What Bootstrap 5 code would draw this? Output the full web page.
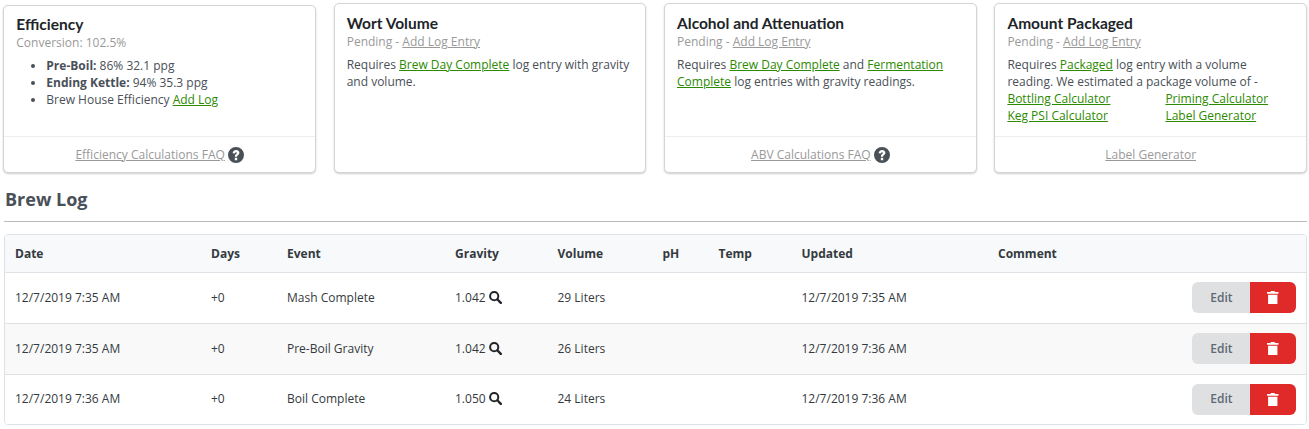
<!DOCTYPE html>
<html lang="en">
<head>
  <meta charset="UTF-8" />
  <meta name="viewport" content="width=device-width, initial-scale=1" />
  <title>Brew Log</title>
  <link href="https://cdn.jsdelivr.net/npm/bootstrap@5.3.0/dist/css/bootstrap.min.css" rel="stylesheet" />
  <style>
    body { font-family: "Open Sans", sans-serif; font-size: 12px; color: #495057; background: #fff; }
    a { color: #2b8a00; }
    .page-wrap { padding: 3px 2px 0 4px; }
    .stat-row { display: flex; gap: 17.75px; align-items: stretch; height: 170px; margin-left: -0.7px; }
    .stat-card { flex: 1 1 0; border: 1px solid #d5d5d5; border-radius: 5px; box-shadow: 0 1px 2px rgba(0,0,0,.2); display: flex; flex-direction: column; background: #fff; }
    .stat-first { margin-top: 2px; }
    .stat-body { flex: 1 1 auto; padding: 9px 12px 0; line-height: 17px; }
    .stat-title { font-family: Lato, sans-serif; font-weight: 700; font-size: 15.5px; line-height: 20px; color: #212529; margin: 0; }
    .stat-first .stat-title { line-height: 19px; }
    .stat-sub { color: #999; margin-bottom: 6px; line-height: 17px; }
    .stat-sub a { color: #999; }
    .stat-list { margin: 0; padding-left: 30px; }
    .stat-foot { height: 36px; border-top: 1px solid #eee; display: flex; align-items: center; justify-content: center; gap: 3px; color: #999; }
    .stat-foot a { color: #999; }
    .help-ico { width: 16px; height: 16px; fill: #495057; }
    .calc-links { display: grid; grid-template-columns: 158px 1fr; }
    .log-title { font-size: 18px; font-weight: 700; line-height: 24px; margin: 14px 0 10px 1px; color: #495057; }
    .log-rule { margin: 0 0 12px; border: 0; border-top: 1px solid #bbb; opacity: 1; }
    .log-box { border: 1px solid #dee2e6; border-radius: 4px; overflow: hidden; }
    .log-table { margin: 0; table-layout: fixed; width: 100%; font-size: 12px; color: #343a40; }
    .log-table th { background: #f8f9fa; height: 37px; padding: 2px 10px 0; font-weight: 700; vertical-align: middle; color: #343a40; border-bottom: 1px solid #dee2e6; }
    .log-table td { height: 51px; padding: 0 10px; vertical-align: middle; border-bottom: 1px solid #dee2e6; background: #fff; color: #343a40; }
    .log-table tr:last-child td { border-bottom: 0; height: 50px; }
    .log-table tr.row-alt td { background: #f9f9f9; }
    .c-date { width: 196px; } .c-days { width: 76px; } .c-event { width: 168px; } .c-grav { width: 102.5px; }
    .c-vol { width: 105px; } .c-ph { width: 56px; } .c-temp { width: 83px; } .c-upd { width: 196.5px; }
    .search-ico { width: 13px; height: 13px; vertical-align: -2px; }
    .btn-edit { width: 59px; height: 31px; padding: 0; background: #dee0e2; border: 0; color: #5f6a75; font-size: 12px; font-weight: 600; }
    .btn-del { width: 46px; height: 31px; padding: 0; background: #e02a2a; border: 0; display: flex; align-items: center; justify-content: center; }
    .btn-del:hover { background: #c92222; }
    .trash-ico { width: 11.5px; height: 13.5px; fill: #fff; }
  </style>
</head>
<body>
  <div class="page-wrap">
    <div class="stat-row">
      <div class="stat-card stat-first">
        <div class="stat-body">
          <h5 class="stat-title">Efficiency</h5>
          <div class="stat-sub">Conversion: 102.5%</div>
          <ul class="stat-list">
            <li><strong>Pre-Boil:</strong> 86% 32.1 ppg</li>
            <li><strong>Ending Kettle:</strong> 94% 35.3 ppg</li>
            <li>Brew House Efficiency <a href="#">Add Log</a></li>
          </ul>
        </div>
        <div class="stat-foot"><a href="#">Efficiency Calculations FAQ</a>
          <svg class="help-ico" viewBox="0 0 16 16"><path fill-rule="evenodd" d="M8 0a8 8 0 1 0 0 16A8 8 0 0 0 8 0zM6.800 10.800h2.400v2.400H6.800zM4.700 6.200C4.700 4.200 6.200 2.900 8.100 2.900c1.900 0 3.300 1.200 3.300 2.900 0 1.300-.8 2-1.500 2.500-.6.400-.8.600-.8 1.100v.3H6.900v-.6c0-1 .5-1.500 1.100-1.900.6-.4.900-.7.900-1.100 0-.5-.3-.8-.8-.8-.6 0-1 .4-1.100 1.100z"/></svg>
        </div>
      </div>
      <div class="stat-card">
        <div class="stat-body">
          <h5 class="stat-title">Wort Volume</h5>
          <div class="stat-sub">Pending - <a href="#">Add Log Entry</a></div>
          <div>Requires <a href="#">Brew Day Complete</a> log entry with gravity and volume.</div>
        </div>
      </div>
      <div class="stat-card">
        <div class="stat-body">
          <h5 class="stat-title">Alcohol and Attenuation</h5>
          <div class="stat-sub">Pending - <a href="#">Add Log Entry</a></div>
          <div>Requires <a href="#">Brew Day Complete</a> and <a href="#">Fermentation Complete</a> log entries with gravity readings.</div>
        </div>
        <div class="stat-foot"><a href="#">ABV Calculations FAQ</a>
          <svg class="help-ico" viewBox="0 0 16 16"><path fill-rule="evenodd" d="M8 0a8 8 0 1 0 0 16A8 8 0 0 0 8 0zM6.800 10.800h2.400v2.400H6.800zM4.700 6.200C4.700 4.200 6.200 2.900 8.100 2.900c1.900 0 3.300 1.200 3.300 2.900 0 1.300-.8 2-1.500 2.500-.6.400-.8.600-.8 1.100v.3H6.900v-.6c0-1 .5-1.500 1.100-1.900.6-.4.900-.7.900-1.100 0-.5-.3-.8-.8-.8-.6 0-1 .4-1.100 1.100z"/></svg>
        </div>
      </div>
      <div class="stat-card">
        <div class="stat-body">
          <h5 class="stat-title">Amount Packaged</h5>
          <div class="stat-sub">Pending - <a href="#">Add Log Entry</a></div>
          <div>Requires <a href="#">Packaged</a> log entry with a volume reading. We estimated a package volume of -</div>
          <div class="calc-links">
            <a href="#">Bottling Calculator</a><a href="#">Priming Calculator</a>
            <a href="#">Keg PSI Calculator</a><a href="#">Label Generator</a>
          </div>
        </div>
        <div class="stat-foot"><a href="#">Label Generator</a></div>
      </div>
    </div>

    <h4 class="log-title">Brew Log</h4>
    <hr class="log-rule" />

    <div class="log-box">
      <table class="table log-table">
        <thead>
          <tr>
            <th class="c-date">Date</th><th class="c-days">Days</th><th class="c-event">Event</th><th class="c-grav">Gravity</th>
            <th class="c-vol">Volume</th><th class="c-ph">pH</th><th class="c-temp">Temp</th><th class="c-upd">Updated</th><th>Comment</th><th></th>
          </tr>
        </thead>
        <tbody>
          <tr>
            <td>12/7/2019 7:35 AM</td><td>+0</td><td>Mash Complete</td>
            <td>1.042 <svg class="search-ico" viewBox="0 0 13 13"><circle cx="5.200" cy="5.200" r="4.100" fill="none" stroke="#212529" stroke-width="2"/><path d="M8.500 8.500l3.300 3.300" stroke="#212529" stroke-width="2.400" stroke-linecap="round"/></svg></td>
            <td>29 Liters</td><td></td><td></td><td>12/7/2019 7:35 AM</td><td></td>
            <td><div class="btn-group float-end"><button class="btn btn-edit">Edit</button><button class="btn btn-del"><svg class="trash-ico" viewBox="0 0 11 13"><path d="M3.800 0h3.400l.5 1H11v1.600H0V1h3.300zM1 3.500h9V12a1 1 0 0 1-1 1H2a1 1 0 0 1-1-1z"/></svg></button></div></td>
          </tr>
          <tr class="row-alt">
            <td>12/7/2019 7:35 AM</td><td>+0</td><td>Pre-Boil Gravity</td>
            <td>1.042 <svg class="search-ico" viewBox="0 0 13 13"><circle cx="5.200" cy="5.200" r="4.100" fill="none" stroke="#212529" stroke-width="2"/><path d="M8.500 8.500l3.300 3.300" stroke="#212529" stroke-width="2.400" stroke-linecap="round"/></svg></td>
            <td>26 Liters</td><td></td><td></td><td>12/7/2019 7:36 AM</td><td></td>
            <td><div class="btn-group float-end"><button class="btn btn-edit">Edit</button><button class="btn btn-del"><svg class="trash-ico" viewBox="0 0 11 13"><path d="M3.800 0h3.400l.5 1H11v1.600H0V1h3.300zM1 3.500h9V12a1 1 0 0 1-1 1H2a1 1 0 0 1-1-1z"/></svg></button></div></td>
          </tr>
          <tr>
            <td>12/7/2019 7:36 AM</td><td>+0</td><td>Boil Complete</td>
            <td>1.050 <svg class="search-ico" viewBox="0 0 13 13"><circle cx="5.200" cy="5.200" r="4.100" fill="none" stroke="#212529" stroke-width="2"/><path d="M8.500 8.500l3.300 3.300" stroke="#212529" stroke-width="2.400" stroke-linecap="round"/></svg></td>
            <td>24 Liters</td><td></td><td></td><td>12/7/2019 7:36 AM</td><td></td>
            <td><div class="btn-group float-end"><button class="btn btn-edit">Edit</button><button class="btn btn-del"><svg class="trash-ico" viewBox="0 0 11 13"><path d="M3.800 0h3.400l.5 1H11v1.600H0V1h3.300zM1 3.500h9V12a1 1 0 0 1-1 1H2a1 1 0 0 1-1-1z"/></svg></button></div></td>
          </tr>
        </tbody>
      </table>
    </div>
  </div>
  <script src="https://cdn.jsdelivr.net/npm/bootstrap@5.3.0/dist/js/bootstrap.bundle.min.js"></script>
</body>
</html>
